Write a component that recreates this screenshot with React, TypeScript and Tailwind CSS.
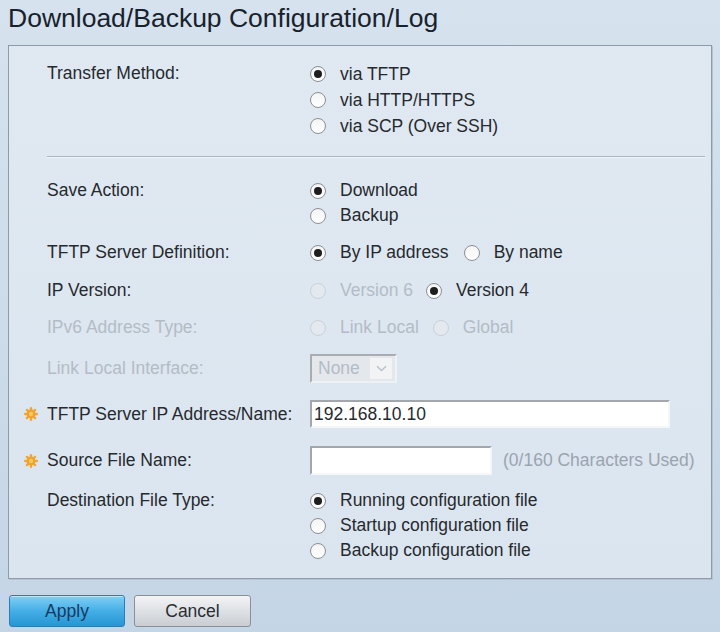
import React from 'react';

const FONT = { fontFamily: '"Liberation Sans", Arial, sans-serif' };

function Radio({ checked = false, disabled = false }: { checked?: boolean; disabled?: boolean }) {
  return (
    <span
      className={`inline-flex h-[16px] w-[16px] shrink-0 items-center justify-center rounded-full border ${
        disabled
          ? 'border-[#c9d1d9] bg-[#e3e9ef]'
          : 'border-[#8c8f93] bg-gradient-to-b from-[#f4f4f4] to-[#ffffff]'
      }`}
    >
      {checked && <span className="h-[8px] w-[8px] rounded-full bg-[#1e1e1e]" />}
    </span>
  );
}

function Option({
  label,
  checked,
  disabled,
  className = '',
}: {
  label: string;
  checked?: boolean;
  disabled?: boolean;
  className?: string;
}) {
  return (
    <div className={`flex items-center ${className}`}>
      <Radio checked={checked} disabled={disabled} />
      <span className={`ml-[14px] ${disabled ? 'text-[#b3bcc5]' : 'text-[#262a2e]'}`}>{label}</span>
    </div>
  );
}

function Star() {
  return (
    <svg width="14" height="14" viewBox="0 0 14 14" className="absolute left-[-23px] top-1/2 -translate-y-1/2">
      <g stroke="#f2a531" strokeWidth="2.4" strokeLinecap="round">
        <line x1="7" y1="1.2" x2="7" y2="12.8" />
        <line x1="1.2" y1="7" x2="12.8" y2="7" />
        <line x1="2.9" y1="2.9" x2="11.1" y2="11.1" />
        <line x1="11.1" y1="2.9" x2="2.9" y2="11.1" />
      </g>
      <circle cx="7" cy="7" r="4.4" fill="#f0a22c" />
      <circle cx="7" cy="7" r="2.2" fill="#f7c85e" />
    </svg>
  );
}

function Row({
  label,
  children,
  disabled,
  required,
  className = '',
  top = false,
}: {
  label: string;
  children: React.ReactNode;
  disabled?: boolean;
  required?: boolean;
  className?: string;
  top?: boolean;
}) {
  return (
    <div className={`flex ${top ? 'items-start' : 'items-center'} ${className}`}>
      <div
        className={`relative flex h-[25px] w-[263px] shrink-0 items-center ${
          disabled ? 'text-[#b3bcc5]' : 'text-[#262a2e]'
        }`}
      >
        {required && <Star />}
        {label}
      </div>
      <div>{children}</div>
    </div>
  );
}

export default function App() {
  return (
    <div
      style={FONT}
      className="h-[632px] w-[720px] overflow-hidden bg-gradient-to-b from-[#d6e2ee] to-[#c4d5e6] text-[17.5px] leading-[25px]"
    >
      <h1 className="h-[45px] pl-[8px] pt-[2px] text-[26.5px] leading-[32px] text-[#18222c]">
        Download/Backup Configuration/Log
      </h1>

      <div className="mx-[8px] h-[534px] border border-[#8e9ba8] bg-gradient-to-b from-[#e0e9f2] to-[#dbe5ef] pl-[38px] pr-[6px] pt-[15px] shadow-[1px_1px_0_#b5c3d0]">
        <Row label="Transfer Method:" top>
          <div className="flex flex-col">
            <Option label="via TFTP" checked className="h-[26px]" />
            <Option label="via HTTP/HTTPS" className="h-[26px]" />
            <Option label="via SCP (Over SSH)" className="h-[26px]" />
          </div>
        </Row>

        <div className="mt-[17px] h-[2px] border-t border-[#a9b6c2] bg-[#f1f5f9]" />

        <Row label="Save Action:" top className="mt-[20px]">
          <div className="flex flex-col">
            <Option label="Download" checked className="h-[25px]" />
            <Option label="Backup" className="h-[25px]" />
          </div>
        </Row>

        <Row label="TFTP Server Definition:" className="mt-[12px]">
          <div className="flex items-center">
            <Option label="By IP address" checked />
            <Option label="By name" className="ml-[15px]" />
          </div>
        </Row>

        <Row label="IP Version:" className="mt-[13px]">
          <div className="flex items-center">
            <Option label="Version 6" disabled />
            <Option label="Version 4" checked className="ml-[13px]" />
          </div>
        </Row>

        <Row label="IPv6 Address Type:" disabled className="mt-[12px]">
          <div className="flex items-center">
            <Option label="Link Local" disabled />
            <Option label="Global" disabled className="ml-[14px]" />
          </div>
        </Row>

        <Row label="Link Local Interface:" disabled className="mt-[14px]">
          <div className="flex h-[29px] w-[87px] items-center border-2 border-b-[#eef2f5] border-l-[#a9adb1] border-r-[#eef2f5] border-t-[#a9adb1] bg-[#e4e8ec] text-[#b3bcc5]">
            <span className="ml-[6px]">None</span>
            <span className="ml-auto mr-[3px] flex h-[21px] w-[22px] items-center justify-center bg-[#f1f3f5]">
              <svg width="11" height="7" viewBox="0 0 11 7">
                <path d="M1 1.2 L5.5 5.5 L10 1.2" fill="none" stroke="#b8c0c8" strokeWidth="1.4" />
              </svg>
            </span>
          </div>
        </Row>

        <Row label="TFTP Server IP Address/Name:" required className="mt-[17px]">
          <div className="flex h-[28px] w-[360px] items-center border-2 border-b-[#f4f6f8] border-l-[#a3a7ab] border-r-[#f4f6f8] border-t-[#a3a7ab] bg-white pl-[2px] text-[#262a2e]">
            192.168.10.10
          </div>
        </Row>

        <Row label="Source File Name:" required className="mt-[18px]">
          <div className="flex items-center">
            <div className="h-[29px] w-[182px] border-2 border-b-[#f4f6f8] border-l-[#a3a7ab] border-r-[#f4f6f8] border-t-[#a3a7ab] bg-white" />
            <span className="ml-[11px] text-[#9aa4ae]">(0/160 Characters Used)</span>
          </div>
        </Row>

        <Row label="Destination File Type:" top className="mt-[13px]">
          <div className="flex flex-col">
            <Option label="Running configuration file" checked className="h-[25px]" />
            <Option label="Startup configuration file" className="h-[25px]" />
            <Option label="Backup configuration file" className="h-[25px]" />
          </div>
        </Row>
      </div>

      <div className="mt-[16px] flex gap-[9px] pl-[9px]">
        <button className="flex h-[32px] w-[116px] items-center justify-center rounded-[3px] border border-[#2c7fb4] bg-gradient-to-b from-[#7fd0f5] via-[#44aee6] to-[#2596d3] text-[#173a63] shadow-[inset_0_1px_0_#b9e6fb]">
          Apply
        </button>
        <button className="flex h-[32px] w-[117px] items-center justify-center rounded-[3px] border border-[#8a9096] bg-gradient-to-b from-[#f3f4f6] to-[#c9cdd2] text-[#2a2e33]">
          Cancel
        </button>
      </div>
    </div>
  );
}
